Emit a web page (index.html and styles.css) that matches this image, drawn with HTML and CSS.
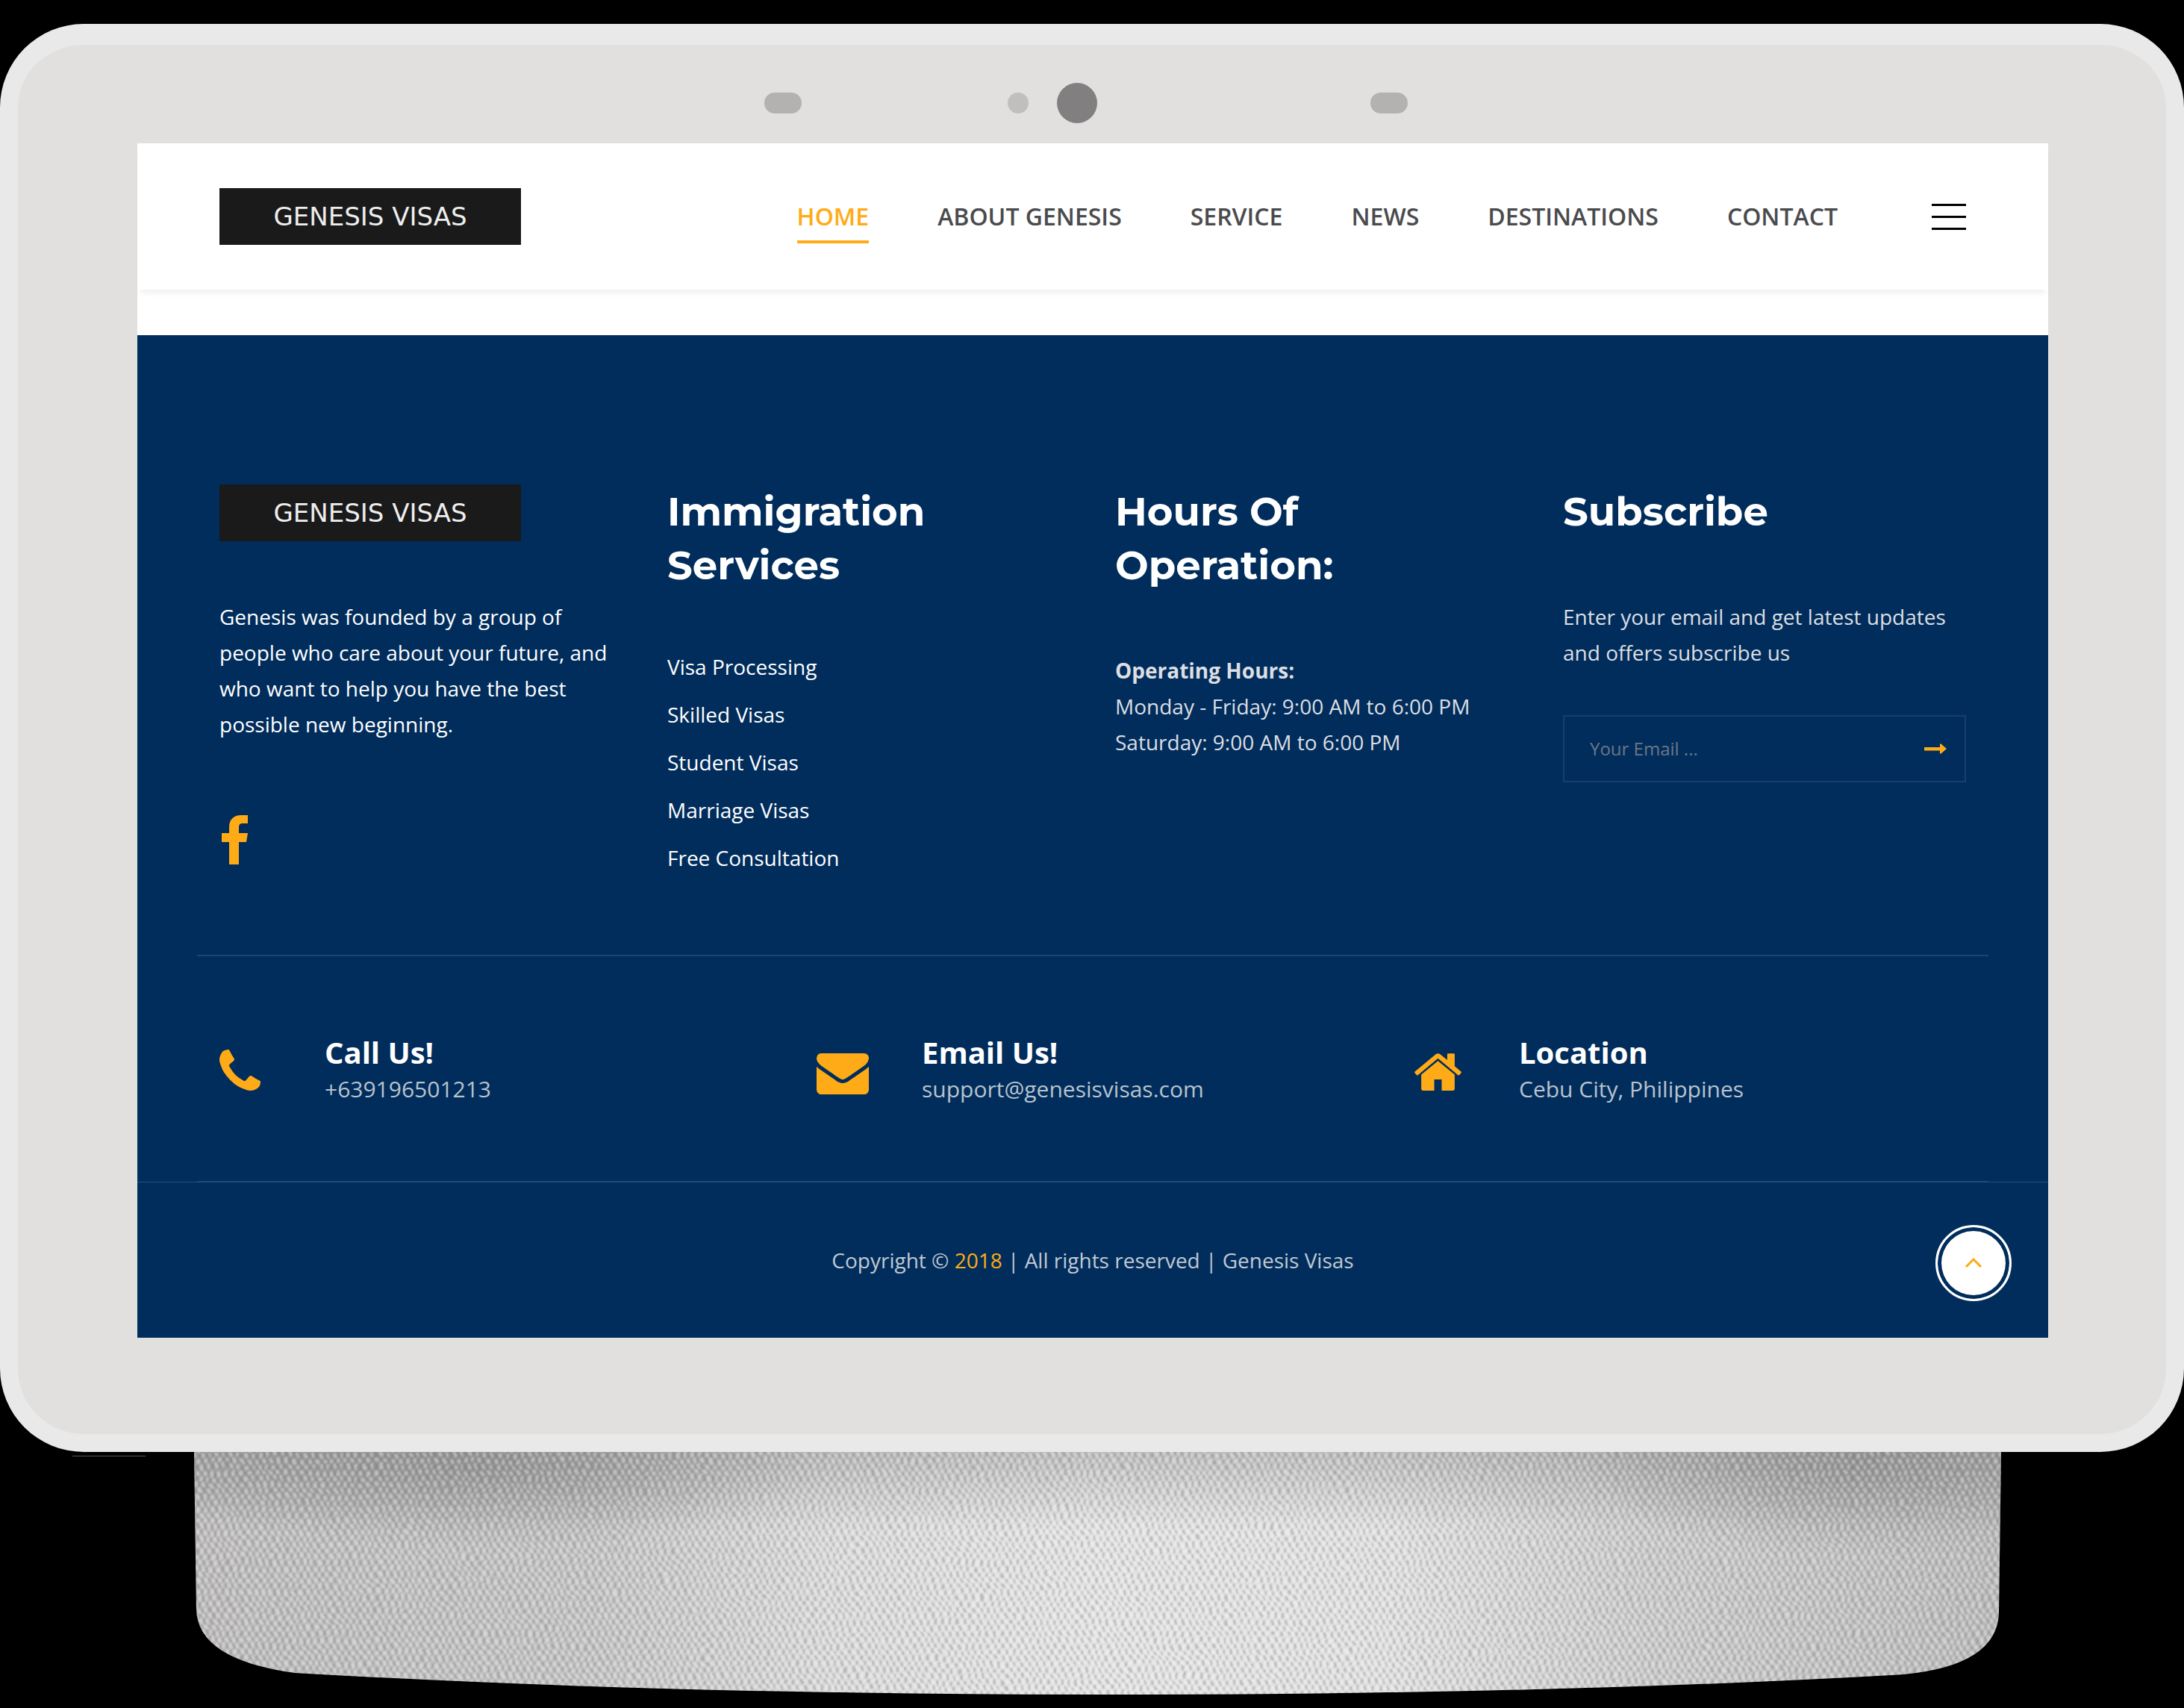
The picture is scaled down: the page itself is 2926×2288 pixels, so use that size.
FILE: index.html
```html
<!DOCTYPE html>
<html lang="en">
<head>
<meta charset="utf-8">
<title>Genesis Visas</title>
<meta name="viewport" content="width=device-width, initial-scale=1">
<link rel="stylesheet" href="styles.css">
</head>
<body>
<div class="device">
  <div class="bezel">
    <div class="sensors" aria-hidden="true">
      <span class="pill"></span>
      <span class="dot"></span>
      <span class="lens"></span>
      <span class="pill"></span>
    </div>
    <div class="screen">
      <header class="header">
        <a class="logo" href="#">GENESIS VISAS</a>
        <nav class="nav" aria-label="Main">
          <a class="nav-link active" href="#">HOME</a>
          <a class="nav-link" href="#">ABOUT GENESIS</a>
          <a class="nav-link" href="#">SERVICE</a>
          <a class="nav-link" href="#">NEWS</a>
          <a class="nav-link" href="#">DESTINATIONS</a>
          <a class="nav-link" href="#">CONTACT</a>
        </nav>
        <button class="burger" type="button" aria-label="Open menu"><span></span><span></span><span></span></button>
      </header>
      <footer class="footer">
        <div class="columns">
          <section>
            <a class="logo" href="#">GENESIS VISAS</a>
            <p class="bright intro">Genesis was founded by a group of people who care about your future, and who want to help you have the best possible new beginning.</p>
            <a class="facebook" href="#" aria-label="Facebook">
              <svg viewBox="0 0 38 66" width="38" height="66"><path d="M38 0v11h-7c-4 0-5 2-5 6v7h12l-2 12H26v30H13V36H3V24h10v-8C13 6 19 0 29 0z"/></svg>
            </a>
          </section>
          <section>
            <h2 class="title">Immigration Services</h2>
            <ul class="links">
              <li><a href="#">Visa Processing</a></li>
              <li><a href="#">Skilled Visas</a></li>
              <li><a href="#">Student Visas</a></li>
              <li><a href="#">Marriage Visas</a></li>
              <li><a href="#">Free Consultation</a></li>
            </ul>
          </section>
          <section>
            <h2 class="title">Hours Of Operation:</h2>
            <p class="below-title"><strong>Operating Hours:</strong><br>Monday - Friday: 9:00 AM to 6:00 PM<br>Saturday: 9:00 AM to 6:00 PM</p>
          </section>
          <section>
            <h2 class="title">Subscribe</h2>
            <p class="below-title">Enter your email and get latest updates and offers subscribe us</p>
            <form class="subscribe">
              <input type="email" placeholder="Your Email ..." aria-label="Your email">
              <button type="submit" aria-label="Subscribe">
                <svg viewBox="0 0 30 14" width="30" height="14"><path d="M0 5h21V0.500q1-.5 2 .5l7 6-7 6q-1 1-2 .5V9.500H0z"/></svg>
              </button>
            </form>
          </section>
        </div>
        <div class="contacts">
          <div class="contact">
            <svg class="phone" viewBox="0 0 1408 1408" width="55" height="55"><path d="M1408 1112q0 27-10 70.500t-21 68.500q-21 50-122 106-94 51-186 51-27 0-53-3.500t-57.500-12.500-47-14.500T856 1357.500 807 1339q-98-35-175-83-127-79-264-216T152 776q-48-77-83-175-3-9-18.500-49T30 496.500 15.500 449.500 3.500 392 0 339q0-92 51-186Q107 52 157 31q25-11 68.500-21T296 0q14 0 21 3 18 6 53 76 11 19 30 54t35 63.500 31 53.500q3 4 17.500 25t21.500 35.500 7 28.500q0 20-28.500 50t-62 55-62 53-28.500 46q0 9 5 22.500t8.500 20.500 14 24 11.500 19q76 137 174 235t235 174q2 1 19 11.500t24 14 20.500 8.500 22.500 5q18 0 46-28.500t53-62 55-62 50-28.500q14 0 28.500 7t35.500 21.500 25 17.500q25 15 53.500 31t63.500 35 54 30q70 35 76 53 3 7 3 21z"/></svg>
            <div><h3>Call Us!</h3><p>+639196501213</p></div>
          </div>
          <div class="contact">
            <svg class="envelope" viewBox="0 0 1792 1408" width="70" height="55"><path d="M1792 454v794q0 66-47 113t-113 47H160q-66 0-113-47T0 1248V454q44 49 101 87 362 246 497 345 57 42 92.500 65.500t94.500 48T895 1024h2q51 0 110-24.500t94.500-48T1194 886q170-123 498-345 57-39 100-87zm0-294q0 79-49 151t-122 123q-376 261-468 325-10 7-42.500 30.500t-54 38-52 32.500-57.500 27-50 9h-2q-23 0-50-9t-57.500-27-52-32.500-54-38T639 759q-91-64-262-182.500T172 434q-62-42-117-115.500T0 182q0-78 41.500-130T160 0h1472q65 0 112.500 47t47.500 113z"/></svg>
            <div><h3>Email Us!</h3><p>support@genesisvisas.com</p></div>
          </div>
          <div class="contact">
            <svg class="house" viewBox="0 0 1664 1312" width="65" height="51"><path d="M1408 768v480q0 26-19 45t-45 19H960V928H704v384H320q-26 0-45-19t-19-45V768q0-1 .5-3t.500-3l575-474 575 474q1 2 1 6zm223-69l-62 74q-8 9-21 11h-3q-13 0-21-7L832 200 140 777q-12 8-24 7-13-2-21-11L33 699q-8-10-7-23.500T37 654L756 55q32-26 76-26t76 26l244 204V64q0-14 9-23t23-9h192q14 0 23 9t9 23v408l219 182q10 8 11 21.500t-7 23.500z"/></svg>
            <div><h3>Location</h3><p>Cebu City, Philippines</p></div>
          </div>
        </div>
        <div class="bottom">
          <p>Copyright © <a href="#">2018</a> | All rights reserved | Genesis Visas</p>
          <button class="to-top" type="button" aria-label="Back to top">
            <svg viewBox="0 0 24 14" width="24" height="14"><path d="M2 12L12 2l10 10"/></svg>
          </button>
        </div>
      </footer>
    </div>
  </div>
  <svg class="stand" viewBox="0 0 2926 343" preserveAspectRatio="none" aria-hidden="true">
    <defs>
      <linearGradient id="cloth">
        <stop offset="0" stop-color="#b9b7b7"/>
        <stop offset=".22" stop-color="#c0c0c0"/>
        <stop offset=".35" stop-color="#d8d8d8"/>
        <stop offset=".5" stop-color="#e2e2e2"/>
        <stop offset=".66" stop-color="#dfdfdf"/>
        <stop offset=".8" stop-color="#c8c8c8"/>
        <stop offset="1" stop-color="#b6b6b6"/>
      </linearGradient>
      <linearGradient id="shade" x2="0" y2="1">
        <stop offset="0" stop-color="#555" stop-opacity=".28"/>
        <stop offset=".3" stop-color="#555" stop-opacity="0"/>
      </linearGradient>
      <radialGradient id="shadow">
        <stop offset="0" stop-color="#666" stop-opacity=".36"/>
        <stop offset="1" stop-color="#666" stop-opacity="0"/>
      </radialGradient>
      <pattern id="weave" width="20" height="16" patternUnits="userSpaceOnUse">
        <path d="M3 1l2 6M13 1l2 6M8 9l2 6M18 9l2 6" stroke="#777" stroke-opacity=".4" stroke-width="3"/>
        <path d="M8 1l2 6M18 1l2 6M3 9l2 6M13 9l2 6" stroke="#fff" stroke-opacity=".4" stroke-width="4"/>
      </pattern>
      <filter id="fray" x="0" y="0" width="1" height="1">
        <feTurbulence type="fractalNoise" baseFrequency=".02 .04" numOctaves="3" seed="4"/>
        <feDisplacementMap in="SourceGraphic" scale="11" xChannelSelector="R" yChannelSelector="G" result="threads"/>
        <feGaussianBlur in="threads" stdDeviation="1"/>
      </filter>
      <clipPath id="outline"><path d="M260 0H2681L2678 215Q2676 286 2550 298Q2080 325 1480 325Q900 325 395 296Q264 278 263 210Z"/></clipPath>
    </defs>
    <g clip-path="url(#outline)">
      <rect x="260" width="2421" height="343" fill="url(#cloth)"/>
      <rect x="260" width="2421" height="343" fill="url(#shade)"/>
      <ellipse cx="640" cy="20" rx="460" ry="110" fill="url(#shadow)"/>
      <ellipse cx="2480" cy="20" rx="360" ry="120" fill="url(#shadow)"/>
      <rect x="230" y="-20" width="2481" height="383" fill="url(#weave)" filter="url(#fray)"/>
    </g>
    <path fill="#555" d="M97 5h98v1H97z"/>
  </svg>
</div>
</body>
</html>
```
FILE: styles.css
```css
* { box-sizing: border-box; }
body {
  margin: 0;
  background: #000;
  color: #dcdfe3;
  font-family: "Open Sans", "Noto Sans", sans-serif;
  font-size: 28px;
  line-height: 48px;
}
h2, h3, p, ul { margin: 0; padding: 0; }
a { color: inherit; text-decoration: none; }
button { border: 0; background: none; padding: 0; cursor: pointer; }
svg { display: block; fill: #ffab17; }

/* Tablet frame */
.device { padding-top: 32px; }
.bezel {
  border: 24px solid #e9e9e9;
  border-top-width: 28px;
  border-radius: 112px;
  background: #e1e0de;
  padding: 0 158px 129px 160px;
}
.sensors {
  display: flex;
  align-items: center;
  justify-content: center;
  height: 132px;
  padding: 24px 18px 0 0;
}
.pill { width: 50px; height: 28px; border-radius: 14px; background: #b3b2b0; }
.dot { width: 28px; height: 28px; border-radius: 50%; background: #c0bfbd; margin-left: 276px; }
.lens { width: 54px; height: 54px; border-radius: 50%; background: #827f80; margin: 0 366px 0 38px; }
.screen { background: #fff; }

/* Header */
.header {
  display: flex;
  align-items: center;
  height: 196px;
  padding: 0 110px;
  box-shadow: 0 8px 8px -4px rgba(0, 0, 0, .07);
}
.logo {
  display: block;
  width: 404px;
  height: 76px;
  background: #1a1a1a;
  color: #eee;
  font: 34px/76px "DejaVu Sans", sans-serif;
  text-align: center;
}
.nav { display: flex; gap: 92px; margin-left: auto; }
.nav-link {
  padding-top: 4px;
  border-bottom: 4px solid transparent;
  color: #4a4b4d;
  font-size: 32px;
  font-weight: 600;
  line-height: 64px;
}
.nav-link.active { color: #ffab17; border-color: #ffab17; }
.burger { display: grid; gap: 13px; width: 46px; margin-left: 126px; }
.burger span { height: 3px; background: #000; }

/* Footer */
.footer { margin-top: 61px; background: #012d5c; }
.columns {
  display: grid;
  grid-template-columns: repeat(4, 1fr);
  gap: 60px;
  margin: 0 80px;
  padding: 200px 30px 106px;
  border-bottom: 2px solid #1b4672;
}
.title { color: #fff; font: 700 53px/72px Montserrat, Inter, sans-serif; }
.bright { color: #fff; }
.intro { margin-top: 77px; }
.facebook { display: block; width: 38px; margin-top: 98px; }
.links { list-style: none; margin-top: 76px; color: #fff; display: grid; gap: 16px; }
.below-title { margin-top: 81px; }
.subscribe {
  display: flex;
  align-items: center;
  height: 90px;
  margin-top: 60px;
  padding: 0 24px 0 34px;
  border: 2px solid #163f69;
}
.subscribe input {
  flex: 1;
  min-width: 0;
  padding: 0;
  border: 0;
  outline: 0;
  background: none;
  color: #fff;
  font: 24px/32px "Open Sans", sans-serif;
}
.subscribe input::placeholder { color: #6c7784; opacity: 1; }

.contacts {
  display: grid;
  grid-template-columns: repeat(3, 1fr);
  margin: 0 80px;
  padding: 105px 0 98px;
  border-bottom: 1px solid #1e476d;
}
.contact { display: grid; grid-template-columns: 141px 1fr; align-items: start; padding-left: 30px; }
.phone { margin-top: 20px; }
.envelope { margin-top: 25px; }
.house { margin-top: 24px; }
.contact h3 { color: #fff; font-size: 40px; line-height: 48px; }
.contact p { color: #b9c3cd; font-size: 30px; line-height: 50px; }
.bottom { position: relative; border-top: 1px solid #244f7c; padding: 80px 0; text-align: center; color: #c0c9d2; }
.bottom a { color: #ffab17; }
.to-top {
  position: absolute;
  right: 49px;
  top: 57px;
  width: 102px;
  height: 102px;
  display: grid;
  place-items: center;
  border: 3px solid #fff;
  border-radius: 50%;
  background: #fff;
  box-shadow: inset 0 0 0 5px #012d5c;
}
.to-top svg { fill: none; stroke: #ffab17; stroke-width: 3; }

.stand { width: 100%; height: 343px; }
```
